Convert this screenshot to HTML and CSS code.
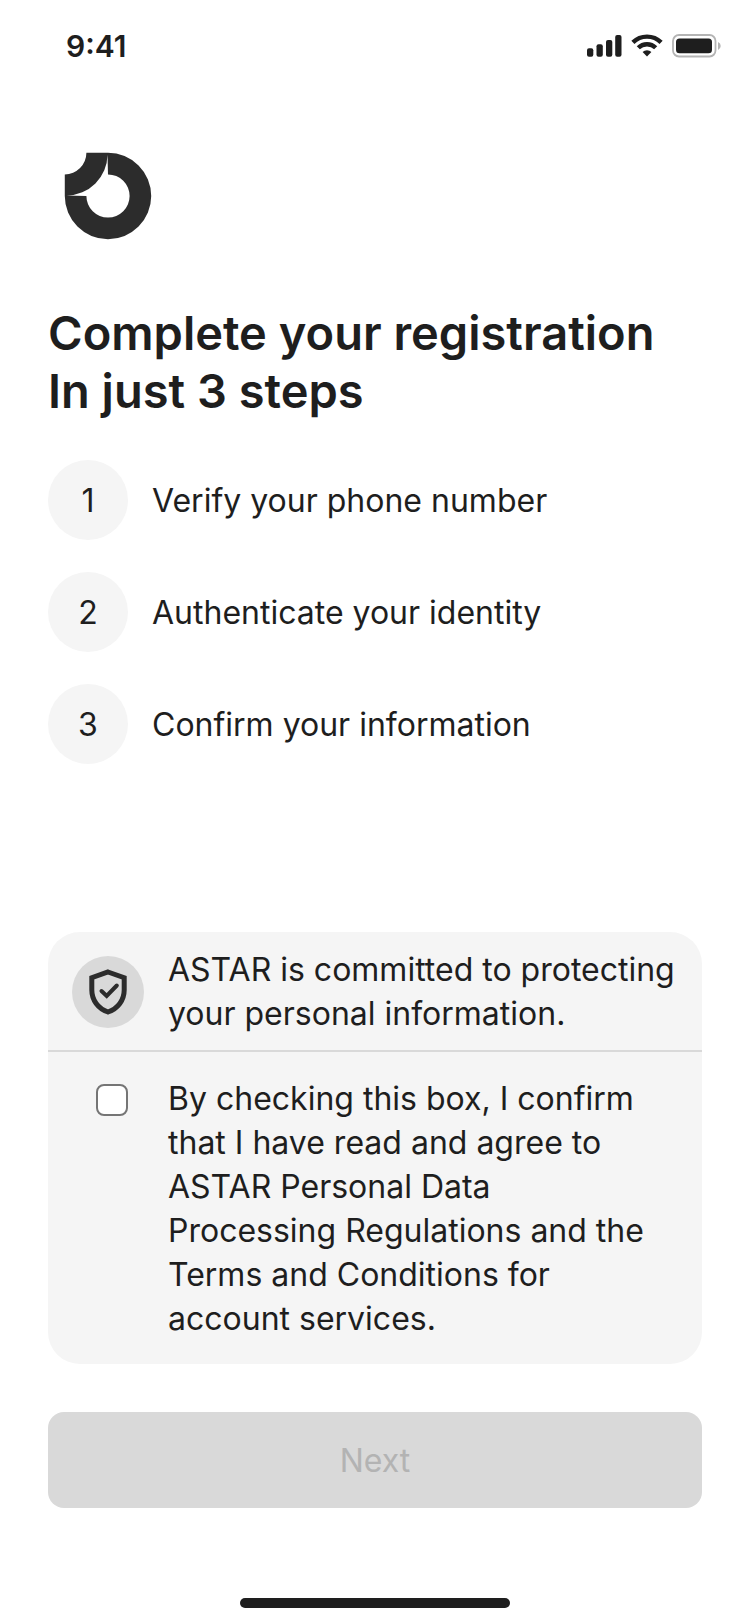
FILE: index.html
```html
<!DOCTYPE html>
<html lang="en">
<head>
<meta charset="utf-8">
<meta name="viewport" content="width=device-width, initial-scale=1">
<title>Complete your registration</title>
<link rel="stylesheet" href="styles.css">
</head>
<body>
<div class="screen">
  <header class="status-bar">
    <time class="clock">9:41</time>
    <div class="status-icons">
      <svg width="35" height="24" viewBox="0 0 35 24" aria-hidden="true" fill="#1e1e1e"><rect x="0" y="14.300" width="6.300" height="8.500" rx="2"/><rect x="9.500" y="10.300" width="6.300" height="12.500" rx="2"/><rect x="19" y="6" width="6.300" height="16.800" rx="2"/><rect x="28.200" y="1" width="6.300" height="21.800" rx="2"/></svg>
      <svg width="32" height="24" viewBox="0 0 32 24" aria-hidden="true" fill="none" stroke="#1e1e1e" stroke-width="4.400"><path d="M1.900 8.400A20 20 0 0 1 30.100 8.400M7.300 13.800A12.300 12.300 0 0 1 24.700 13.800"/><path d="M11.600 18.100A6.300 6.300 0 0 1 20.400 18.100L16 22.500Z" fill="#1e1e1e" stroke="none"/></svg>
      <svg width="49" height="24" viewBox="0 0 49 24" aria-hidden="true"><rect x="1" y="1" width="42.500" height="21.500" rx="6" fill="none" stroke="#b4b4b4" stroke-width="1.800"/><rect x="4" y="4.500" width="36" height="14.700" rx="3.500" fill="#1e1e1e"/><path d="M46 8Q48.700 9.200 48.700 12T46 16Z" fill="#b4b4b4"/></svg>
    </div>
  </header>
  <main class="content">
    <svg class="logo" width="88" height="88" viewBox="-0.800 -0.800 89.600 89.600" role="img" aria-label="ASTAR" fill="#2c2c2c"><path d="M22 0H44A44 44 0 1 1 0 44V22A22 22 0 0 0 22 0Z"/><path d="M43.500 2A42 42 0 0 1 2 43.500L22 44A22 22 0 1 0 44 22Z" fill="#fff"/></svg>
    <h1 class="title">Complete your registration<br>In just 3 steps</h1>
    <ol class="steps">
      <li class="step"><span class="step-number">1</span>Verify your phone number</li>
      <li class="step"><span class="step-number">2</span>Authenticate your identity</li>
      <li class="step"><span class="step-number">3</span>Confirm your information</li>
    </ol>
    <section class="consent">
      <div class="notice">
        <span class="badge"><svg width="38" height="46" viewBox="0 0 38 46" aria-hidden="true" fill="none" stroke="#2c2c2c" stroke-width="5"><path d="M19 3L35.200 8.700V21C35.200 31 29 39.500 19 43C9 39.500 2.800 31 2.800 21V8.700Z"/><path d="M12.500 22L17.700 27L27.800 16.500" stroke-width="4" stroke-linecap="round"/></svg></span>
        <p class="text">ASTAR is committed to protecting your personal information.</p>
      </div>
      <div class="agreement">
        <input class="checkbox" type="checkbox" id="agree">
        <label class="text" for="agree">By checking this box, I confirm that I have read and agree to ASTAR Personal Data Processing Regulations and the Terms and Conditions for account services.</label>
      </div>
    </section>
    <button class="next" type="button" disabled>Next</button>
  </main>
  <div class="home-indicator"></div>
</div>
</body>
</html>
```
FILE: styles.css
```css
* { box-sizing: border-box; }
body { margin: 0; background: #fff; color: #1e1e1e; font-family: Inter, sans-serif; font-size: 32px; }
.screen { min-height: 100vh; display: flex; flex-direction: column; }
.status-bar { display: flex; justify-content: space-between; align-items: center; height: 92px; padding: 0 29px 0 66px; }
.clock { font-size: 30px; font-weight: 600; }
.status-icons { display: flex; align-items: center; gap: 9px; }
.content { flex: 1; display: flex; flex-direction: column; padding: 60px 48px 0; }
.logo { margin-left: 16px; }
.title { margin: 64px 0 0; font-size: 47px; line-height: 58px; font-weight: 600; }
.steps { list-style: none; margin: 40px 0 0; padding: 0; display: flex; flex-direction: column; gap: 32px; }
.step { display: flex; align-items: center; gap: 24px; }
.step-number { display: flex; align-items: center; justify-content: center; width: 80px; height: 80px; border-radius: 50%; background: #f5f5f5; }
.consent { margin-top: 168px; border-radius: 32px; background: #f5f5f5; }
.notice { display: flex; align-items: center; gap: 24px; padding: 16px 24px 14px; border-bottom: 2px solid #d9d9d9; }
.badge { flex: none; display: flex; align-items: center; justify-content: center; width: 72px; height: 72px; border-radius: 50%; background: #d9d9d9; }
.text { margin: 0; line-height: 44px; }
.agreement { display: flex; align-items: flex-start; gap: 40px; padding: 25px 48px 23px; }
.checkbox { flex: none; appearance: none; width: 32px; height: 32px; margin: 7px 0 0; border: 2px solid #757575; border-radius: 8px; background: #fff; }
.next { height: 96px; margin-top: 48px; border: 0; border-radius: 16px; background: #d9d9d9; color: #b3b3b3; font: inherit; }
.home-indicator { align-self: center; width: 36%; height: 10px; margin-bottom: 16px; border-radius: 5px; background: #1e1e1e; }
```
